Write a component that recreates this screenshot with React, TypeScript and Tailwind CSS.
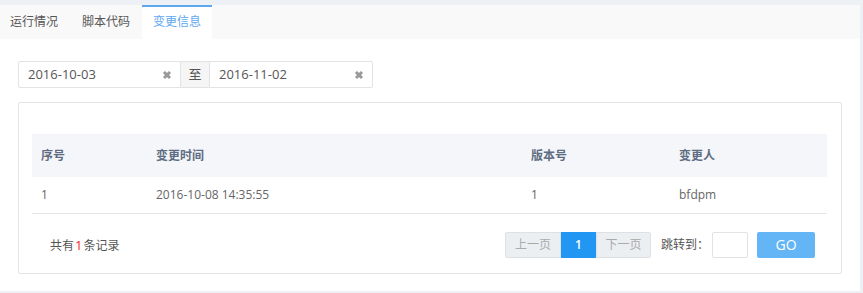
import React, { useState } from 'react'

const tabs = ['运行情况', '脚本代码', '变更信息']

const rows = [{ id: 1, time: '2016-10-08 14:35:55', version: '1', user: 'bfdpm' }]

const Clear = () => (
  <svg viewBox="0 0 10 10" className="w-[10px] h-[10px]">
    <path d="M2 2 L8 8 M8 2 L2 8" stroke="#999" strokeWidth="3" />
  </svg>
)

export default function App() {
  const [active, setActive] = useState(2)
  const [from, setFrom] = useState('2016-10-03')
  const [to, setTo] = useState('2016-11-02')

  return (
    <div
      className="w-[863px] h-[293px] bg-[#edf0f4] pt-[5px] pr-[3px] pb-[2px] text-[12px] text-[#666]"
      style={{ fontFamily: '"Open Sans", "Noto Sans CJK SC", sans-serif' }}
    >
      <div className="w-[860px] h-[286px] bg-white flex flex-col">
        {/* Tabs */}
        <div className="flex h-[34px] bg-[#f9f9f9]">
          {tabs.map((t, i) => (
            <div
              key={t}
              onClick={() => setActive(i)}
              className={
                i === active
                  ? 'flex items-center justify-center w-[70px] ml-[2px] bg-white border-t-2 border-[#5ea8f1] text-[#5ea8f1] pb-[2px] cursor-pointer'
                  : 'flex items-center px-[10px] text-[#555] cursor-pointer ' + (i === 1 ? 'ml-[4px]' : '')
              }
            >
              {t}
            </div>
          ))}
        </div>

        {/* Date range */}
        <div className="flex mt-[22px] ml-[18px] h-[27px] text-[13px]">
          <div className="flex items-center w-[163px] border border-[#e3e3e3] rounded-l-[2px] pl-[9px] pr-[8px]">
            <input
              value={from}
              onChange={e => setFrom(e.target.value)}
              className="flex-1 min-w-0 outline-none bg-transparent text-[#555]"
            />
            <Clear />
          </div>
          <div className="flex items-center justify-center w-[28px] bg-[#f5f5f5] border-y border-[#e3e3e3] text-[#555]">至</div>
          <div className="flex items-center w-[164px] border border-[#e3e3e3] rounded-r-[2px] pl-[9px] pr-[8px]">
            <input
              value={to}
              onChange={e => setTo(e.target.value)}
              className="flex-1 min-w-0 outline-none bg-transparent text-[#555]"
            />
            <Clear />
          </div>
        </div>

        {/* Card */}
        <div className="mt-[14px] ml-[18px] w-[824px] h-[172px] border border-[#e4e4e4] rounded-[2px] pt-[31px] px-[13px]">
          <table className="w-[795px] border-collapse">
            <thead>
              <tr className="h-[43px] bg-[#f4f6f9] text-[#5e6d82] text-left">
                <th className="pl-[9px] w-[124px] font-semibold">序号</th>
                <th className="w-[375px] font-semibold">变更时间</th>
                <th className="w-[148px] font-semibold">版本号</th>
                <th className="font-semibold">变更人</th>
              </tr>
            </thead>
            <tbody>
              {rows.map(r => (
                <tr key={r.id} className="h-[36px] border-b border-[#e3e6eb]">
                  <td className="pl-[9px]">{r.id}</td>
                  <td>{r.time}</td>
                  <td>{r.version}</td>
                  <td>{r.user}</td>
                </tr>
              ))}
            </tbody>
          </table>

          {/* Footer */}
          <div className="flex items-center mt-[18px] h-[26px]">
            <div className="flex items-baseline ml-[18px] mt-[2px] text-[#555]">
              <span>共有</span>
              <span className="text-[13px] font-medium text-[#ff1a1a] mx-[1px]">1</span>
              <span>条记录</span>
            </div>
            <div className="ml-auto flex h-[26px]">
              <button className="w-[56px] bg-[#eceff2] border border-[#dde1e5] rounded-l-[2px] text-[#aaa]">上一页</button>
              <button className="w-[35px] bg-[#2196f3] text-white font-semibold">1</button>
              <button className="w-[55px] bg-[#eceff2] border border-[#dde1e5] rounded-r-[2px] text-[#aaa]">下一页</button>
            </div>
            <span className="ml-[10px] text-[#555]">跳转到：</span>
            <input className="ml-[3px] w-[36px] h-[26px] border border-[#e3e3e3] rounded-[2px] outline-none" />
            <button className="ml-[9px] mr-[13px] w-[58px] h-[26px] bg-[#64b5f6] text-white text-[14px] rounded-[2px]">GO</button>
          </div>
        </div>
      </div>
    </div>
  )
}
